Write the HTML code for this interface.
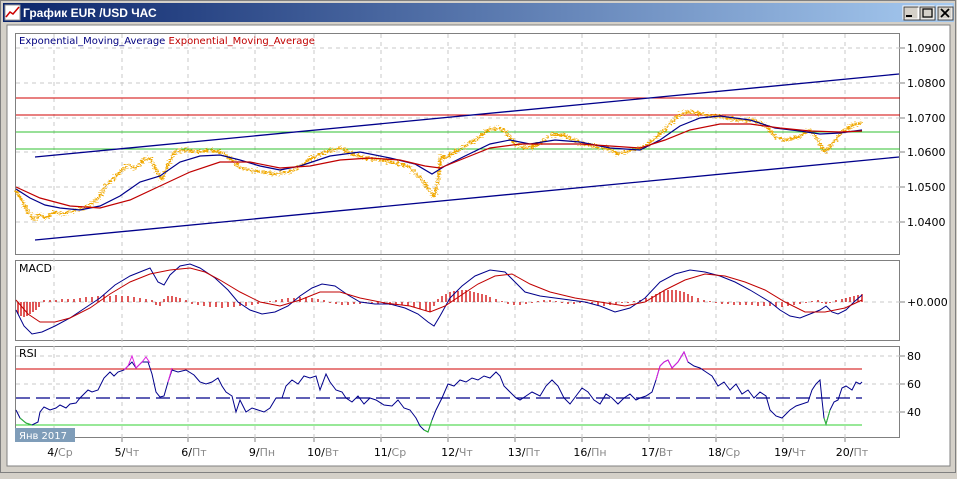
<!DOCTYPE html>
<html><head><meta charset="utf-8">
<style>
body{margin:0;width:957px;height:474px;overflow:hidden;background:#d4d0c8;font-family:"Liberation Sans","DejaVu Sans",sans-serif}
</style></head><body>
<svg width="957" height="474" xmlns="http://www.w3.org/2000/svg" font-family="'DejaVu Sans','Liberation Sans',sans-serif">
<defs><linearGradient id="tb" x1="0" x2="1"><stop offset="0" stop-color="#0a246a"/><stop offset="1" stop-color="#a6caf0"/></linearGradient>
<filter id="jit" x="-5%" y="-20%" width="110%" height="140%"><feTurbulence type="fractalNoise" baseFrequency="0.35 0.9" numOctaves="2" seed="3"/><feDisplacementMap in="SourceGraphic" scale="9" xChannelSelector="R" yChannelSelector="G"/></filter></defs>
<rect x="0" y="0" width="957" height="474" fill="#d4d0c8"/>
<rect x="0.5" y="0.5" width="955" height="472" fill="none" stroke="#808080"/>
<rect x="3" y="3" width="951" height="19" fill="url(#tb)"/>
<rect x="5" y="5" width="15" height="15" fill="#fff" stroke="#999"/>
<polyline points="6,17 10,12 13,14 19,7" fill="none" stroke="#c00" stroke-width="1.5"/>
<text x="23" y="17" fill="#fff" font-size="12" font-weight="bold" font-family="Liberation Sans,sans-serif">График EUR /USD  ЧАС</text>
<g font-size="12" font-weight="bold">
<rect x="903" y="6" width="15" height="13" fill="#d4d0c8" stroke="#fff"/><rect x="904" y="7" width="15" height="13" fill="none" stroke="#404040"/><rect x="906" y="15" width="6" height="2" fill="#000"/>
<rect x="919" y="6" width="15" height="13" fill="#d4d0c8" stroke="#fff"/><rect x="920" y="7" width="15" height="13" fill="none" stroke="#404040"/><rect x="923" y="9" width="9" height="8" fill="none" stroke="#000" stroke-width="1.2"/>
<rect x="937" y="6" width="15" height="13" fill="#d4d0c8" stroke="#fff"/><rect x="938" y="7" width="15" height="13" fill="none" stroke="#404040"/><path d="M941 9L949 17M949 9L941 17" stroke="#000" stroke-width="1.8"/>
</g>
<rect x="7" y="25" width="943" height="441" fill="#fff" stroke="#808080"/>
<g fill="none" stroke="#808080"><rect x="15.5" y="33.5" width="884" height="221"/><rect x="15.5" y="260.5" width="884" height="80"/><rect x="15.5" y="346.5" width="884" height="91"/></g>
<g stroke="#c8c8c8" stroke-dasharray="4,4">
<path d="M16 48H900M16 83H900M16 118H900M16 152H900M16 187H900M16 222H900M16 302H900M16 356H900M16 384H900M16 412H900"/>
<path d="M54 34V438M122 34V438M188 34V438M255 34V438M314 34V438M381 34V438M448 34V438M515 34V438M582 34V438M649 34V438M716 34V438M783 34V438M845 34V438"/>
</g>
<g stroke="#808080"><path d="M900 48h5M900 83h5M900 118h5M900 152h5M900 187h5M900 222h5M900 302h5M900 356h5M900 384h5M900 412h5"/>
<path d="M54 438v4M122 438v4M188 438v4M255 438v4M314 438v4M381 438v4M448 438v4M515 438v4M582 438v4M649 438v4M716 438v4M783 438v4M845 438v4"/></g>
<g font-size="11" fill="#000">
<text x="907" y="52">1.0900</text><text x="907" y="87">1.0800</text><text x="907" y="122">1.0700</text><text x="907" y="156">1.0600</text><text x="907" y="191">1.0500</text><text x="907" y="226">1.0400</text>
<text x="907" y="306">+0.000</text><text x="907" y="360">80</text><text x="907" y="388">60</text><text x="907" y="416">40</text>
</g>
<text x="19" y="44" font-size="10" fill="#000080">Exponential_Moving_Average <tspan fill="#c00000">Exponential_Moving_Average</tspan></text>
<path d="M16 98H900M16 115H900" stroke="#d00000"/>
<path d="M16 132H900M16 149H900" stroke="#30c030"/>
<path d="M35 157L899 74M35 240L899 157" stroke="#00008b" stroke-width="1.3"/>
<g filter="url(#jit)">
<polyline fill="none" stroke="#f0a800" stroke-width="2.2" stroke-linejoin="bevel" points="16,190 22,200 28,212 34,220 40,214 46,218 54,212 64,214 76,210 90,206 100,196 106,185 112,180 120,172 128,165 136,168 144,160 150,158 156,170 162,180 168,165 175,152 185,150 198,152 210,150 222,153 232,160 240,168 250,170 262,172 275,174 290,172 300,166 312,158 325,152 340,148 352,154 365,158 380,160 395,163 408,166 416,174 424,182 430,192 434,197 438,182 441,156 446,158 455,152 465,146 478,138 488,130 500,128 508,134 516,144 526,148 538,145 552,134 566,136 578,142 592,146 606,148 618,154 632,150 646,146 658,136 668,126 680,114 692,112 706,115 722,117 738,120 754,120 766,126 774,136 784,140 798,137 810,130 818,140 824,152 832,144 842,132 852,126 862,122"/>
</g>
<polyline fill="none" stroke="#00008b" stroke-width="1.2" points="16,189 30,198 45,205 60,208 80,210 100,206 120,196 140,182 160,176 180,162 200,156 220,155 240,160 260,166 280,170 300,166 330,156 360,152 390,158 415,164 432,174 445,166 465,156 490,144 510,140 530,144 555,140 580,142 610,148 640,150 660,140 680,126 700,118 720,116 750,120 775,128 800,131 820,134 840,133 862,130"/>
<polyline fill="none" stroke="#c00000" stroke-width="1.2" points="16,187 40,198 70,206 100,208 130,200 160,186 190,172 220,162 250,162 280,168 310,166 340,160 370,158 400,160 425,166 440,168 460,160 490,148 520,144 550,144 580,144 610,146 640,148 665,140 690,130 720,124 750,124 780,128 810,131 840,132 862,131"/>
<text x="19" y="272" font-size="11" fill="#000">MACD</text>
<g stroke="#d00000" stroke-width="1.3">
<path d="M18 302v12M21 302v14M24 302v15M27 302v14M30 302v12M33 302v10M36 302v8M39 302v5M44 302v-2M50 302v-2M56 302v-2M62 302v-3M68 302v-3M74 302v-3M80 302v-4M86 302v-5M92 302v-5M98 302v-6M104 302v-7M110 302v-6M116 302v-7M122 302v-6M128 302v-6M134 302v-5M140 302v-4M146 302v-3M152 302v-2M156 302v3M160 302v4M164 302v-3M168 302v-6M172 302v-6M176 302v-5M180 302v-4M186 302v-2M192 302v2M198 302v3M204 302v4M210 302v5M216 302v5M222 302v6M228 302v5M234 302v5M240 302v4M246 302v4M252 302v3M258 302v2M264 302v1M270 302v-1M276 302v-2M282 302v-3M288 302v-4M294 302v-4M300 302v-5M306 302v-5M312 302v-4M318 302v-3M324 302v-2M330 302v1M336 302v2M342 302v3M348 302v3M354 302v2M360 302v2M366 302v1M372 302v1M378 302v2M384 302v2M390 302v3M396 302v3M402 302v3M408 302v4M414 302v5M420 302v7M426 302v9M430 302v10M434 302v4M438 302v-3M442 302v-6M446 302v-8M450 302v-10M454 302v-11M458 302v-11M462 302v-12M466 302v-12M470 302v-11M474 302v-10M478 302v-9M482 302v-8M486 302v-7M490 302v-5M496 302v-3M502 302v-1M508 302v2M514 302v3M520 302v3M526 302v2M532 302v1M538 302v-1M544 302v-2M550 302v-2M556 302v-1M562 302v1M568 302v2M574 302v2M580 302v1M586 302v1M592 302v2M598 302v3M604 302v4M610 302v3M616 302v2M622 302v1M628 302v1M634 302v-1M640 302v-2M646 302v-4M652 302v-6M656 302v-8M660 302v-10M664 302v-11M668 302v-12M672 302v-12M676 302v-12M680 302v-11M684 302v-10M688 302v-8M692 302v-6M698 302v-4M704 302v-2M710 302v-1M716 302v1M722 302v2M728 302v2M734 302v3M740 302v3M746 302v3M752 302v3M758 302v4M764 302v4M770 302v4M776 302v5M782 302v5M788 302v4M794 302v3M800 302v2M806 302v1M812 302v-1M818 302v-2M822 302v1M826 302v2M830 302v1M836 302v-2M842 302v-3M846 302v-4M850 302v-5M854 302v-6M858 302v-7M862 302v-8"/>
</g>
<polyline fill="none" stroke="#00008b" stroke-width="1" points="16,310 24,326 32,334 42,332 55,326 70,318 85,308 100,298 115,285 130,276 145,270 150,268 158,282 164,285 170,275 180,266 190,264 200,268 215,278 228,290 238,302 250,310 262,314 275,312 288,306 300,296 312,288 322,284 335,286 348,295 360,302 375,304 390,304 405,308 418,314 428,322 434,326 440,316 450,298 462,286 475,276 490,270 505,272 515,282 525,292 540,296 555,298 570,300 585,302 600,306 615,312 630,308 645,298 660,282 675,274 690,270 705,272 720,276 735,282 750,290 760,296 770,302 780,310 790,316 800,318 810,314 820,310 826,306 832,312 838,314 846,310 854,302 862,295"/>
<polyline fill="none" stroke="#c00000" stroke-width="1" points="16,300 28,314 40,322 55,322 70,318 90,308 110,294 130,282 150,274 170,270 190,268 205,272 220,280 240,292 260,302 280,306 300,300 320,292 340,292 360,298 385,303 410,306 430,312 445,306 460,296 478,284 495,276 512,274 530,284 550,292 575,298 600,302 625,306 645,302 665,290 685,280 705,274 725,276 745,282 765,290 785,302 805,312 825,312 845,308 862,300"/>
<text x="19" y="357" font-size="11" fill="#000">RSI</text>
<path d="M16 369H862" stroke="#d00000"/>
<path d="M16 425H862" stroke="#30d030"/>
<path d="M16 398H862" stroke="#00008b" stroke-width="1.3" stroke-dasharray="14,6"/>
<polyline fill="none" stroke="#00008b" stroke-width="1" points="16,410 20,418 26,423 32,425 38,422 40,412 44,407 50,410 56,408 60,405 66,408 70,404 76,403 80,398 88,390 92,392 98,390 104,378 110,372 114,376 118,372 124,370 128,366 132,362 136,368 142,362 148,362 152,374 156,392 160,397 164,396 168,382 172,370 178,372 186,370 194,375 200,382 206,384 212,382 218,378 222,386 226,392 232,396 236,412 240,400 246,412 252,408 258,410 264,412 270,408 276,398 282,398 286,386 292,380 298,384 304,376 310,378 316,376 320,390 326,374 330,382 336,390 342,392 346,398 352,402 358,396 364,404 370,398 376,400 384,405 392,406 398,400 404,408 410,410 416,418 420,426 424,430 428,432 432,420 436,410 442,398 448,384 454,386 460,380 466,382 472,378 478,380 484,376 490,378 496,372 500,376 504,386 510,392 516,398 520,400 526,396 532,392 540,396 546,386 552,380 558,386 564,398 570,404 576,396 582,388 588,392 594,400 600,404 606,394 612,398 618,404 624,398 630,394 636,400 640,398 646,396 652,392 656,380 660,366 664,362 668,360 672,368 678,362 684,352 688,362 694,366 700,368 706,372 712,376 718,386 724,382 730,390 736,384 742,394 748,390 754,398 760,392 766,396 770,410 776,416 782,418 790,410 796,406 802,404 808,402 812,390 816,384 820,380 822,400 824,418 826,424 830,410 834,402 838,400 842,388 846,386 852,390 856,382 860,384 862,382"/>
<path d="M124 370L128 366L132 356L136 368L142 362L146 357L150 363M168 382L172 368M656 380L660 366L664 362L668 360L672 368L678 362L684 352L688 362" fill="none" stroke="#e020e0"/>
<path d="M20 418L26 423L32 425M424 430L428 432L432 420M824 418L826 424L830 410" fill="none" stroke="#30c030"/>
<rect x="15" y="428" width="60" height="14" fill="#7f9db9"/>
<text x="19" y="439" font-size="10" fill="#fff">Янв 2017</text>
<g font-size="11" fill="#000" text-anchor="middle">
<text x="60" y="456">4/<tspan fill="#888">Ср</tspan></text>
<text x="127" y="456">5/<tspan fill="#888">Чт</tspan></text>
<text x="194" y="456">6/<tspan fill="#888">Пт</tspan></text>
<text x="262" y="456">9/<tspan fill="#888">Пн</tspan></text>
<text x="323" y="456">10/<tspan fill="#888">Вт</tspan></text>
<text x="390" y="456">11/<tspan fill="#888">Ср</tspan></text>
<text x="457" y="456">12/<tspan fill="#888">Чт</tspan></text>
<text x="524" y="456">13/<tspan fill="#888">Пт</tspan></text>
<text x="590" y="456">16/<tspan fill="#888">Пн</tspan></text>
<text x="657" y="456">17/<tspan fill="#888">Вт</tspan></text>
<text x="724" y="456">18/<tspan fill="#888">Ср</tspan></text>
<text x="790" y="456">19/<tspan fill="#888">Чт</tspan></text>
<text x="852" y="456">20/<tspan fill="#888">Пт</tspan></text>
</g>
</svg>
</body></html>
